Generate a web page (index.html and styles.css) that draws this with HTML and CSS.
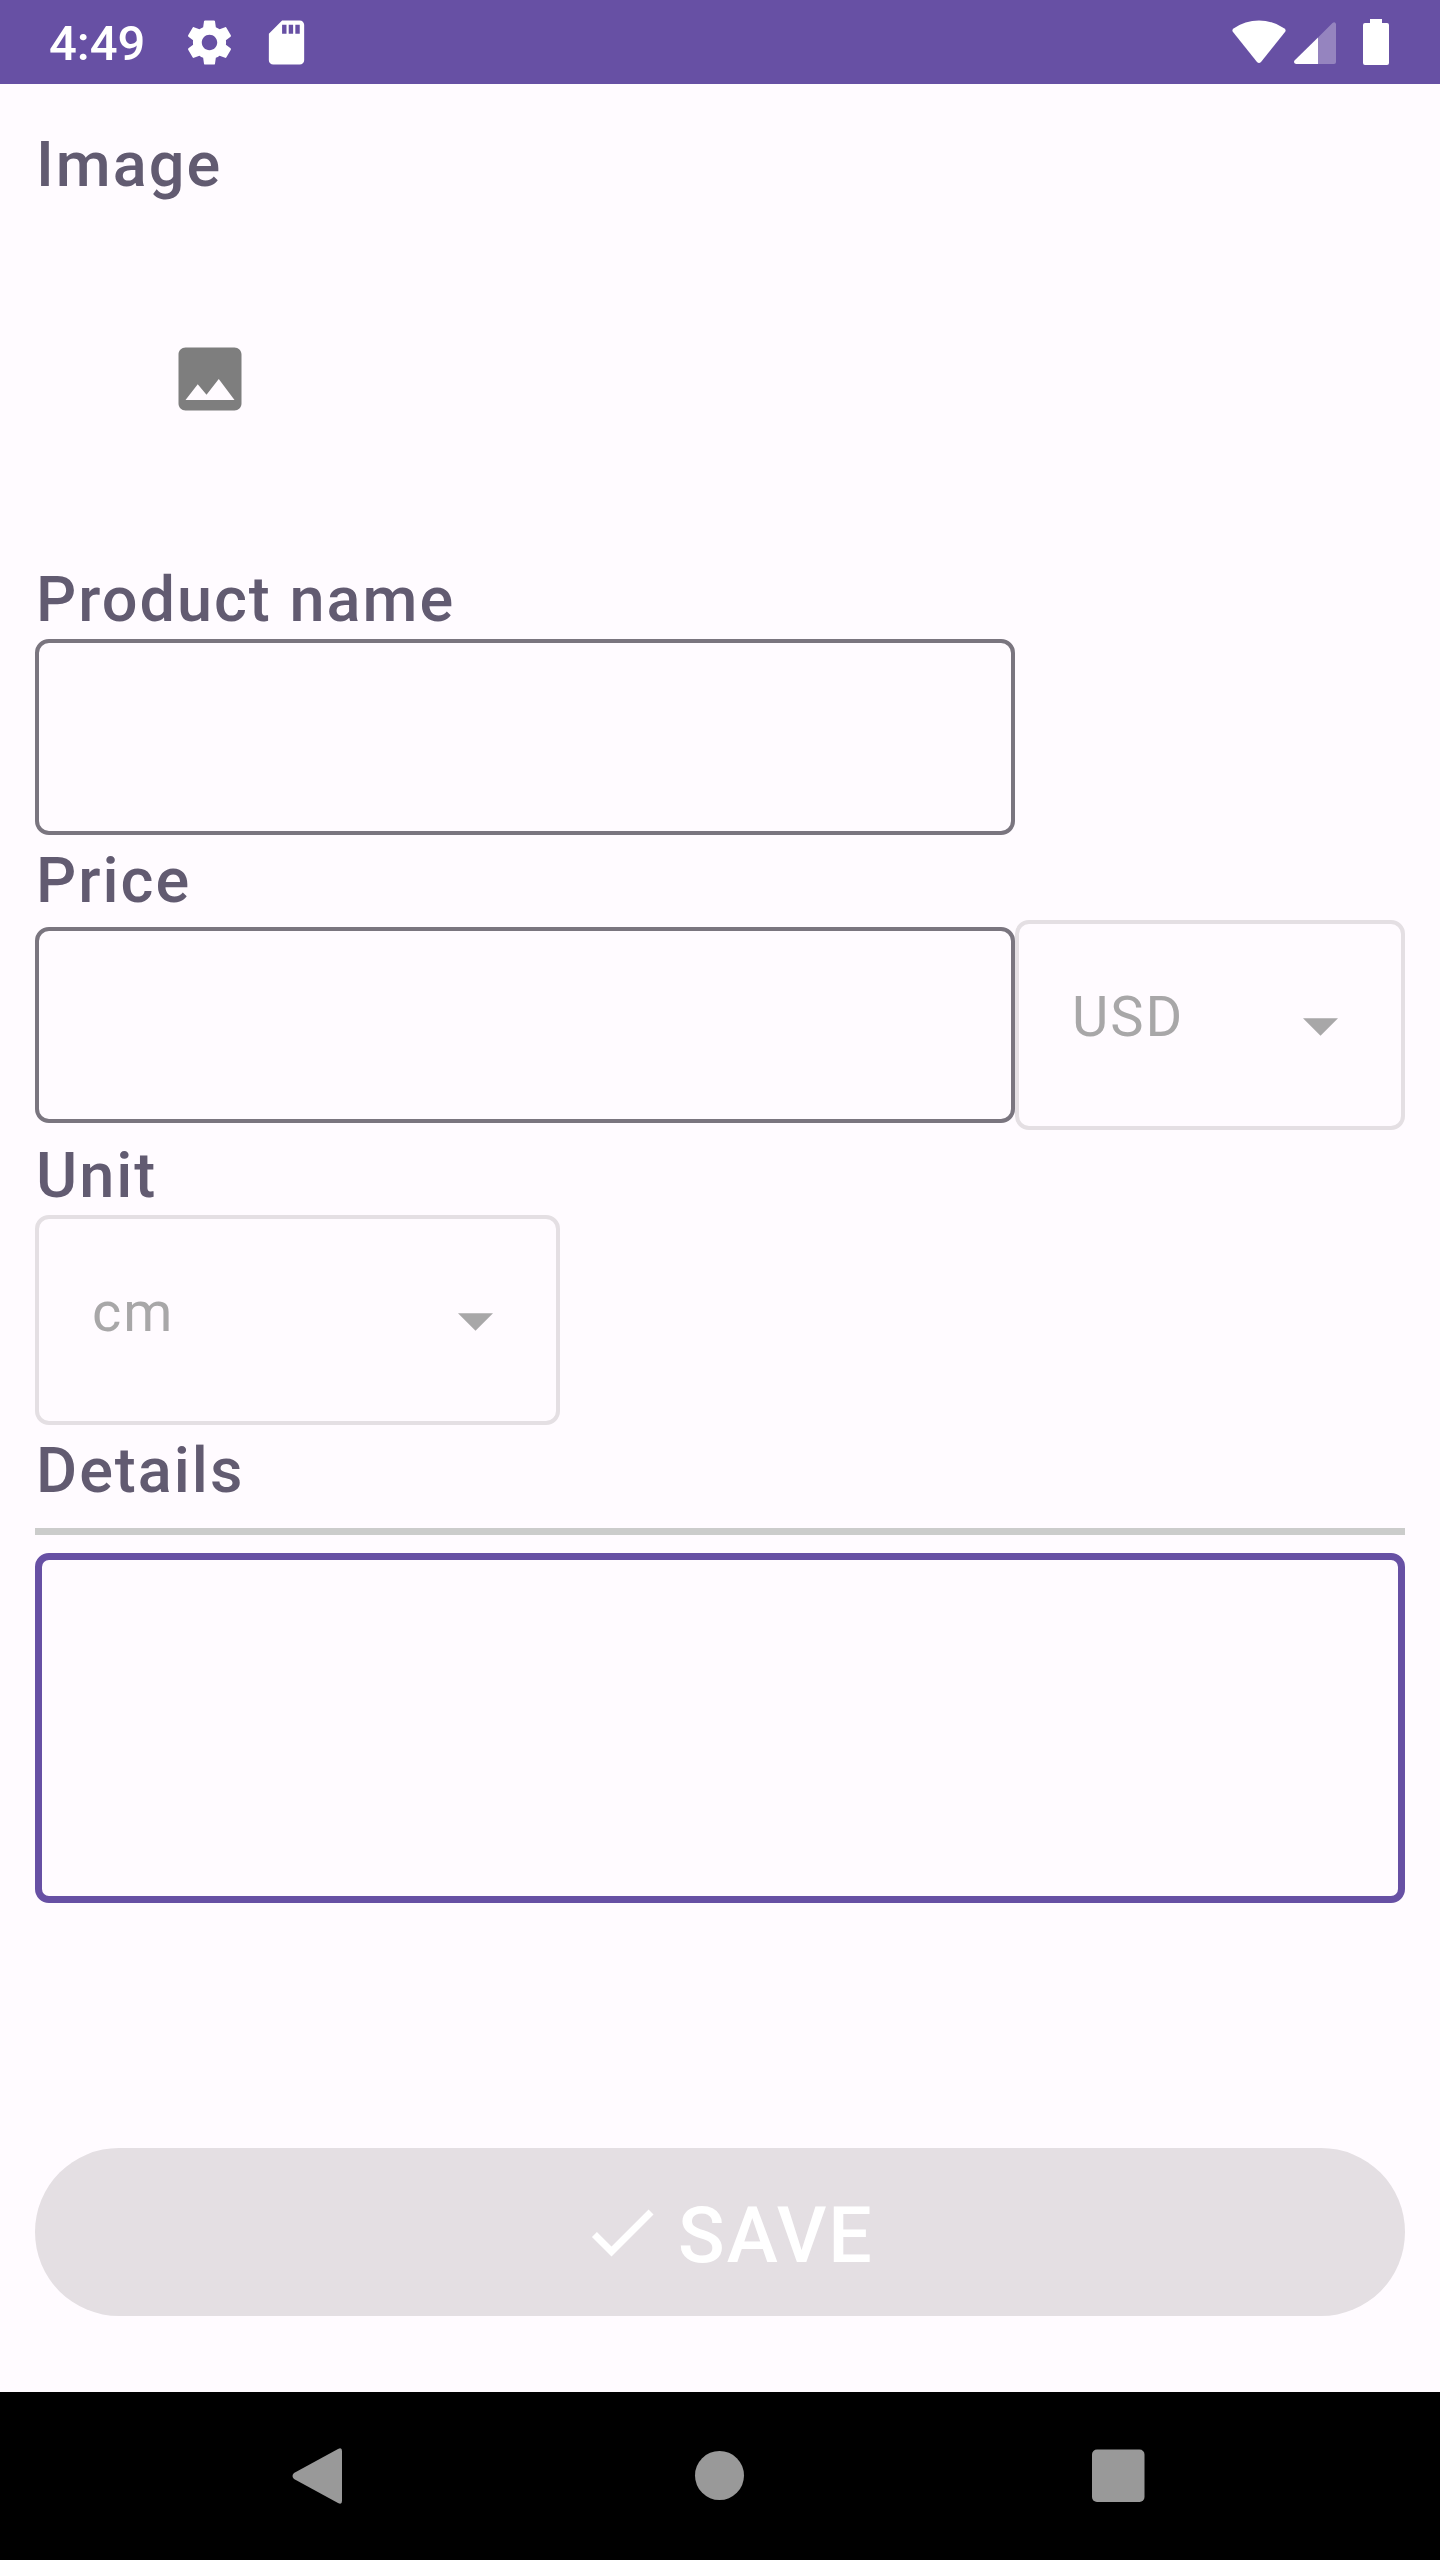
FILE: index.html
```html
<!DOCTYPE html>
<html lang="en">
<head>
<meta charset="utf-8">
<meta name="viewport" content="width=device-width, initial-scale=1">
<title>Product</title>
<link rel="stylesheet" href="styles.css">
</head>
<body>
<header class="status-bar">
  <div class="status-group">
    <span class="clock">4:49</span>
    <svg class="status-icon" viewBox="0 0 24 24" aria-hidden="true"><path d="M19.43 12.98c.04-.32.07-.64.07-.98s-.03-.66-.07-.98l2.11-1.65c.19-.15.24-.42.12-.64l-2-3.46c-.12-.22-.39-.3-.61-.22l-2.49 1c-.52-.4-1.08-.73-1.69-.98l-.38-2.65A.488.488 0 0 0 14 2h-4c-.25 0-.46.18-.49.42l-.38 2.65c-.61.25-1.17.59-1.69.98l-2.49-1c-.23-.09-.49 0-.61.22l-2 3.46c-.13.22-.07.49.12.64l2.11 1.65c-.04.32-.07.65-.07.98s.03.66.07.98l-2.11 1.65c-.19.15-.24.42-.12.64l2 3.46c.12.22.39.3.61.22l2.49-1c.52.4 1.08.73 1.69.98l.38 2.65c.03.24.24.42.49.42h4c.25 0 .46-.18.49-.42l.38-2.65c.61-.25 1.17-.59 1.69-.98l2.49 1c.23.09.49 0 .61-.22l2-3.46c.12-.22.07-.49-.12-.64l-2.11-1.65zM12 15.5c-1.93 0-3.5-1.57-3.5-3.5s1.57-3.5 3.5-3.5 3.5 1.57 3.5 3.5-1.57 3.5-3.5 3.5z"/></svg>
    <svg class="status-icon" viewBox="0 0 24 24" aria-hidden="true"><path d="M18 2h-8L4.02 8 4 20c0 1.1.9 2 2 2h12c1.1 0 2-.9 2-2V4c0-1.1-.9-2-2-2zm-6 6h-2V4h2v4zm3 0h-2V4h2v4zm3 0h-2V4h2v4z"/></svg>
  </div>
  <div class="signal-group">
    <svg class="wifi" viewBox="0 0 54 44" aria-hidden="true"><path d="M1.500 8.500Q13 .5 27 .5T52.500 8.500Q54.500 10 53 12L29 42Q27 44 25 42L1 12Q-.5 10 1.500 8.500z"/></svg>
    <svg class="cell" viewBox="0 0 42 42" aria-hidden="true"><path d="M24 15.500V42H2Q-1 41 .5 38.500z"/><path opacity=".3" d="M24 15.500L38.500 1Q41 -1 42 2V40Q42 42 40 42H24z"/></svg>
    <svg class="battery" viewBox="0 0 26 46" aria-hidden="true"><path d="M7 0h12v4h5q2 0 2 2v38q0 2-2 2H2q-2 0-2-2V6q0-2 2-2h5z"/></svg>
  </div>
</header>

<main class="screen">
  <form class="form">
    <h2 class="label">Image</h2>
    <button class="picker" type="button" aria-label="Choose image">
      <svg class="icon" viewBox="0 0 24 24" aria-hidden="true"><path d="M21 19V5c0-1.100-.9-2-2-2H5c-1.100 0-2 .9-2 2v14c0 1.100.9 2 2 2h14c1.100 0 2-.9 2-2zM8.500 13.500l2.500 3.010L14.500 12l4.500 6H5l3.500-4.500z"/></svg>
    </button>

    <label class="label" for="name">Product name</label>
    <input class="field" id="name" type="text">

    <label class="label" for="price">Price</label>
    <div class="row">
      <input class="field" id="price" type="text" inputmode="decimal">
      <div class="dropdown dropdown-fill">
        <select class="select" aria-label="Currency" disabled><option>USD</option></select>
        <svg class="arrow" viewBox="0 0 10 5" aria-hidden="true"><path d="M0 0l5 5 5-5z"/></svg>
      </div>
    </div>

    <label class="label" for="unit">Unit</label>
    <div class="dropdown dropdown-unit">
      <select class="select" id="unit" disabled><option>cm</option></select>
      <svg class="arrow" viewBox="0 0 10 5" aria-hidden="true"><path d="M0 0l5 5 5-5z"/></svg>
    </div>

    <label class="label" for="details">Details</label>
    <hr class="divider">
    <textarea class="details" id="details"></textarea>

    <button class="save" type="submit" disabled>
      <svg class="icon" viewBox="0 0 24 24" aria-hidden="true"><path d="M9 16.170L4.830 12l-1.420 1.410L9 19 21 7l-1.410-1.410z"/></svg>
      <span class="save-text">SAVE</span>
    </button>
  </form>
</main>

<nav class="nav-bar">
  <button class="nav-button" type="button" aria-label="Back"><svg class="nav-icon" viewBox="0 0 56 56" aria-hidden="true"><path d="M2 25L46 1Q50-1 50 3V53Q50 57 46 55L2 31Q-1 28 2 25z"/></svg></button>
  <button class="nav-button" type="button" aria-label="Home"><svg class="nav-icon" viewBox="0 0 56 56" aria-hidden="true"><circle cx="27.500" cy="27.500" r="24.500"/></svg></button>
  <button class="nav-button" type="button" aria-label="Recent apps"><svg class="nav-icon" viewBox="0 0 56 56" aria-hidden="true"><rect x="0" y="1.500" width="52.500" height="52.500" rx="5"/></svg></button>
</nav>
</body>
</html>
```
FILE: styles.css
```css
*,
*::before,
*::after {
  box-sizing: border-box;
}

body {
  display: flex;
  flex-direction: column;
  min-height: 100vh;
  margin: 0;
  background: #fffbff;
  font-family: Roboto, "Noto Sans", sans-serif;
}

svg {
  display: block;
  flex: none;
  fill: currentColor;
}

button {
  padding: 0;
  border: 0;
  background: none;
  font: inherit;
}

.status-bar {
  display: flex;
  align-items: center;
  justify-content: space-between;
  height: 84px;
  padding: 0 51px 0 49px;
  background: #6750a4;
  color: #fff;
}

.status-group {
  display: flex;
  align-items: center;
  gap: 24px;
}

.clock {
  margin-right: 14px;
  padding-top: 4px;
  font-size: 49px;
  font-weight: 500;
  line-height: 58px;
}

.status-icon {
  width: 53px;
  height: 53px;
}

.signal-group {
  display: flex;
  align-items: center;
}

.wifi {
  width: 54px;
  height: 44px;
}

.cell {
  width: 42px;
  height: 42px;
  margin: 2px 27px 0 8px;
}

.battery {
  width: 26px;
  height: 46px;
}

.screen {
  display: flex;
  flex: 1;
  padding: 35px 35px 76px;
}

.form {
  display: flex;
  flex: 1;
  flex-direction: column;
  align-items: flex-start;
  min-width: 0;
}

.label {
  margin: 0;
  padding: 9px 0 2px 1px;
  color: #625b71;
  font-size: 63px;
  font-weight: 500;
  letter-spacing: 2px;
  line-height: 74px;
}

.picker {
  display: grid;
  place-items: center;
  width: 350px;
  height: 350px;
  color: #7e7e7e;
}

.icon {
  width: 84px;
  height: 84px;
}

.row {
  display: flex;
  align-items: center;
  width: 100%;
}

.field {
  flex: none;
  width: 980px;
  max-width: 72%;
  height: 196px;
  padding: 0 56px;
  border: 4px solid #7a757f;
  border-radius: 14px;
  background: transparent;
  color: #1c1b1f;
  font: 56px Roboto, sans-serif;
}

.dropdown {
  position: relative;
  height: 210px;
  color: #a8a7a8;
}

.dropdown-fill {
  flex: 1;
}

.dropdown-unit {
  width: 525px;
}

.select {
  width: 100%;
  height: 100%;
  padding: 0 120px 16px 53px;
  border: 4px solid #e4dfe3;
  border-radius: 14px;
  appearance: none;
  background: transparent;
  color: inherit;
  font: 56px Roboto, sans-serif;
  letter-spacing: 2px;
  opacity: 1;
}

.arrow {
  position: absolute;
  top: 98px;
  right: 67px;
  width: 35px;
  height: 18px;
  pointer-events: none;
}

.divider {
  width: 100%;
  height: 7px;
  margin: 18px 0;
  border: 0;
  background: #cbcccb;
}

.details {
  width: 100%;
  height: 350px;
  padding: 49px;
  border: 7px solid #6750a4;
  border-radius: 14px;
  background: transparent;
  color: #1c1b1f;
  font: 56px Roboto, sans-serif;
  resize: none;
}

.save {
  display: flex;
  align-items: center;
  justify-content: center;
  gap: 14px;
  width: 100%;
  height: 168px;
  margin-top: auto;
  padding-left: 14px;
  border-radius: 84px;
  background: #e4dfe3;
  color: #fff;
  font-size: 77px;
  font-weight: 500;
  letter-spacing: 2px;
  line-height: 90px;
}

.save-text {
  padding-top: 8px;
}

.nav-bar {
  display: flex;
  align-items: center;
  justify-content: center;
  gap: 120px;
  height: 168px;
  background: #000;
  color: #999;
}

.nav-button {
  display: grid;
  place-items: center;
  width: 280px;
  height: 168px;
  color: inherit;
}

.nav-icon {
  width: 56px;
  height: 56px;
}
```
